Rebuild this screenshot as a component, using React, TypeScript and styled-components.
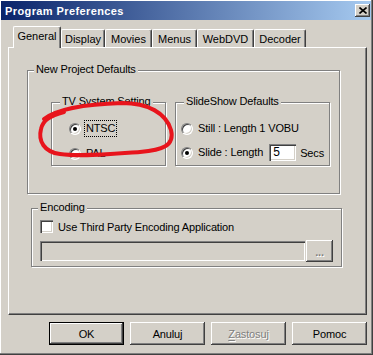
import React from "react";
import styled, { createGlobalStyle } from "styled-components";

const GlobalStyle = createGlobalStyle`
  html, body {
    margin: 0;
    padding: 0;
    background: #d4d0c8;
    overflow: hidden;
  }
  body {
    font-family: "Liberation Sans", Arial, sans-serif;
    font-size: 11px;
    letter-spacing: -0.15px;
    color: #000;
  }
`;

const TABS = ["General", "Display", "Movies", "Menus", "WebDVD", "Decoder"];
const TAB_WIDTHS = [48, 44, 47, 45, 57, 52];

export default function App() {
  return (
    <>
      <GlobalStyle />
      <Window>
        <TitleBar>
          <TitleText>Program Preferences</TitleText>
          <CloseButton>
            <svg width="8" height="7" viewBox="0 0 8 7">
              <path d="M0.5 0.5 L7.5 6.5 M7.5 0.5 L0.5 6.5" stroke="#000" strokeWidth="1.6" />
            </svg>
          </CloseButton>
        </TitleBar>

        <Body>
          <TabRow>
            {TABS.map((t, i) => (
              <Tab key={t} $selected={i === 0} style={{ width: TAB_WIDTHS[i] }}>
                {t}
              </Tab>
            ))}
          </TabRow>

          <Panel>
            <GroupBox $width={313} $height={124}>
              <GroupLabel>New Project Defaults</GroupLabel>
              <GroupRow>
                <GroupBox $width={115} $height={64}>
                  <GroupLabel $left={8}>TV System Setting</GroupLabel>
                  <OptionList $padLeft={17} $gap={8}>
                    <OptionRow>
                      <Radio $checked />
                      <OptionText $focused>NTSC</OptionText>
                    </OptionRow>
                    <OptionRow>
                      <Radio />
                      <OptionText>PAL</OptionText>
                    </OptionRow>
                  </OptionList>
                </GroupBox>

                <GroupBox $width={155} $height={64}>
                  <GroupLabel $left={8}>SlideShow Defaults</GroupLabel>
                  <OptionList $padLeft={5} $gap={7}>
                    <OptionRow>
                      <Radio />
                      <OptionText>Still : Length 1 VOBU</OptionText>
                    </OptionRow>
                    <OptionRow>
                      <Radio $checked />
                      <OptionText>Slide : Length</OptionText>
                      <NumberField>5</NumberField>
                      <UnitText>Secs</UnitText>
                    </OptionRow>
                  </OptionList>
                </GroupBox>
              </GroupRow>
            </GroupBox>

            <EncodingBox>
              <GroupLabel $left={6}>Encoding</GroupLabel>
              <CheckRow>
                <Checkbox />
                <span>Use Third Party Encoding Application</span>
              </CheckRow>
              <PathRow>
                <PathField />
                <BrowseButton>...</BrowseButton>
              </PathRow>
            </EncodingBox>
          </Panel>

          <ButtonRow>
            <DialogButton $default>OK</DialogButton>
            <DialogButton>Anuluj</DialogButton>
            <DialogButton $disabled>
              <u>Z</u>astosuj
            </DialogButton>
            <DialogButton>Pomoc</DialogButton>
          </ButtonRow>
        </Body>

        <Scribble width="373" height="355" viewBox="0 0 373 355">
          <path
            d="M44 119 C58 108, 92 104, 122 103 C148 103, 166 113, 171 130 C175 146, 162 150, 140 152 C112 154, 82 157, 60 154 C44 152, 38 141, 41 129 C43 120, 50 116, 64 112"
            fill="none"
            stroke="#e8141c"
            strokeWidth="4"
            strokeLinecap="round"
            strokeLinejoin="round"
          />
        </Scribble>
      </Window>
    </>
  );
}

// window frame
const Window = styled.div`
  position: relative;
  width: 373px;
  height: 355px;
  box-sizing: border-box;
  padding: 1px 2px 0 1px;
  background: #d4d0c8;
  display: flex;
  flex-direction: column;
  box-shadow: inset -1px -1px #404040, inset -2px -2px #808080, inset 1px 1px #fff;
`;

const TitleBar = styled.div`
  height: 19px;
  display: flex;
  align-items: center;
  justify-content: space-between;
  padding: 0 1px 0 4px;
  background: linear-gradient(to right, #0a246a, #a6caf0);
`;

const TitleText = styled.span`
  color: #fff;
  font-weight: bold;
  font-size: 11px;
  letter-spacing: 0.4px;
`;

const CloseButton = styled.div`
  width: 15px;
  height: 13px;
  box-sizing: border-box;
  background: #d4d0c8;
  display: flex;
  align-items: center;
  justify-content: center;
  box-shadow: inset -1px -1px #404040, inset 1px 1px #fff, inset -2px -2px #808080;
`;

const Body = styled.div`
  display: flex;
  flex-direction: column;
  padding: 6px 0 0 7px;
`;

// tabs
const TabRow = styled.div`
  display: flex;
  align-items: flex-end;
  height: 21px;
  padding-left: 5px;
`;

const Tab = styled.div<{ $selected?: boolean }>`
  position: relative;
  z-index: ${(p) => (p.$selected ? 1 : 0)};
  height: ${(p) => (p.$selected ? 22 : 18)}px;
  margin-bottom: ${(p) => (p.$selected ? -1 : 0)}px;
  box-sizing: border-box;
  padding-top: 3px;
  text-align: center;
  letter-spacing: 0;
  background: #d4d0c8;
  border-top: 1px solid #fff;
  border-left: 1px solid #fff;
  border-right: 1px solid #404040;
  border-radius: 2px 2px 0 0;
  box-shadow: inset -1px 0 #808080;
`;

const Panel = styled.div`
  width: 359px;
  height: 268px;
  box-sizing: border-box;
  padding: 22px 0 0 18px;
  border: 1px solid;
  border-color: #fff #404040 #404040 #fff;
  box-shadow: inset -1px -1px #808080;
`;

// group boxes
const GroupBox = styled.div<{ $width: number; $height: number }>`
  position: relative;
  width: ${(p) => p.$width}px;
  height: ${(p) => p.$height}px;
  box-sizing: border-box;
  border: 1px solid #808080;
  box-shadow: inset 1px 1px #fff, 1px 1px #fff;
`;

const GroupLabel = styled.span<{ $left?: number }>`
  position: absolute;
  top: -8px;
  left: ${(p) => p.$left ?? 6}px;
  padding: 0 2px;
  line-height: 13px;
  background: #d4d0c8;
  white-space: nowrap;
`;

const GroupRow = styled.div`
  display: flex;
  gap: 9px;
  padding: 31px 0 0 23px;
`;

const OptionList = styled.div<{ $padLeft: number; $gap: number }>`
  display: flex;
  flex-direction: column;
  gap: ${(p) => p.$gap}px;
  padding: 17px 0 0 ${(p) => p.$padLeft}px;
`;

const OptionRow = styled.div`
  display: flex;
  align-items: center;
  min-height: 13px;
  white-space: nowrap;
`;

const Radio = styled.span<{ $checked?: boolean }>`
  width: 12px;
  height: 12px;
  flex-shrink: 0;
  box-sizing: border-box;
  border-radius: 50%;
  background: #fff;
  border: 1px solid;
  border-color: #808080 #fff #fff #808080;
  box-shadow: inset 1px 1px #404040, inset -1px -1px #d4d0c8;
  display: flex;
  align-items: center;
  justify-content: center;

  &::after {
    content: "";
    width: 4px;
    height: 4px;
    border-radius: 50%;
    background: ${(p) => (p.$checked ? "#000" : "transparent")};
  }
`;

const OptionText = styled.span<{ $focused?: boolean }>`
  margin-left: 3px;
  padding: 1px 1px;
  line-height: 13px;
  border: 1px dotted ${(p) => (p.$focused ? "#000" : "transparent")};
`;

const NumberField = styled.div`
  width: 27px;
  height: 17px;
  box-sizing: border-box;
  margin-left: 4px;
  padding: 2px 0 0 4px;
  background: #fff;
  line-height: 13px;
  font-size: 12px;
  box-shadow: inset 1px 1px #808080, inset 2px 2px #404040, inset -1px -1px #fff, inset -2px -2px #d4d0c8;
`;

const UnitText = styled.span`
  margin-left: 4px;
`;

const EncodingBox = styled.div`
  position: relative;
  width: 311px;
  height: 59px;
  box-sizing: border-box;
  margin: 14px 0 0 4px;
  padding: 11px 0 0 8px;
  border: 1px solid #808080;
  box-shadow: inset 1px 1px #fff, 1px 1px #fff;
`;

const CheckRow = styled.div`
  display: flex;
  align-items: center;
  gap: 5px;
  height: 13px;
`;

const Checkbox = styled.span`
  width: 13px;
  height: 13px;
  box-sizing: border-box;
  background: #fff;
  box-shadow: inset 1px 1px #808080, inset 2px 2px #404040, inset -1px -1px #fff, inset -2px -2px #d4d0c8;
`;

const PathRow = styled.div`
  display: flex;
  align-items: center;
  margin-top: 7px;
  height: 22px;
`;

const PathField = styled.div`
  width: 265px;
  height: 20px;
  box-sizing: border-box;
  background: #d4d0c8;
  box-shadow: inset 1px 1px #808080, inset 2px 2px #404040, inset -1px -1px #fff, inset -2px -2px #d4d0c8;
`;

const BrowseButton = styled.div`
  width: 27px;
  height: 22px;
  margin-left: 1px;
  box-sizing: border-box;
  display: flex;
  align-items: flex-end;
  justify-content: center;
  padding-bottom: 5px;
  line-height: 9px;
  font-weight: bold;
  color: #808080;
  text-shadow: 1px 1px #fff;
  box-shadow: inset -1px -1px #404040, inset 1px 1px #fff, inset -2px -2px #808080;
`;

// dialog buttons
const ButtonRow = styled.div`
  width: 359px;
  display: flex;
  justify-content: flex-end;
  gap: 6px;
  margin-top: 7px;
`;

const DialogButton = styled.div<{ $default?: boolean; $disabled?: boolean }>`
  width: 75px;
  height: 23px;
  box-sizing: border-box;
  display: flex;
  align-items: center;
  justify-content: center;
  border: ${(p) => (p.$default ? "1px solid #000" : "none")};
  color: ${(p) => (p.$disabled ? "#808080" : "#000")};
  text-shadow: ${(p) => (p.$disabled ? "1px 1px #fff" : "none")};
  box-shadow: inset -1px -1px #404040, inset 1px 1px #fff, inset -2px -2px #808080;

  u {
    text-decoration-thickness: 1px;
    text-underline-offset: 2px;
  }
`;

const Scribble = styled.svg`
  position: absolute;
  left: 0;
  top: 0;
  pointer-events: none;
`;
